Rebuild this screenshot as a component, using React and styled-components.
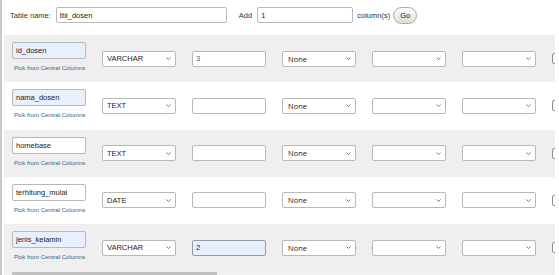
import React from 'react'
import styled, { createGlobalStyle } from 'styled-components'

const Global = createGlobalStyle`
  html, body {
    margin: 0;
    padding: 0;
    background: #fff;
  }
  body {
    font-family: 'Liberation Sans', Arial, sans-serif;
  }
`

const Page = styled.div`
  width: 557px;
  height: 275px;
  overflow: hidden;
  border-left: 2px solid #c9c9c9;
  background: #fff;
`

const Header = styled.div`
  display: flex;
  align-items: center;
  height: 35px;
  padding: 0 0 5px 8px;
  box-sizing: border-box;
  font-size: 7.5px;
  color: #333;
`

const Label = styled.span`
  margin-left: ${(p) => p.$gap || 0}px;
  white-space: nowrap;
`

const Field = styled.input`
  display: block;
  box-sizing: border-box;
  width: ${(p) => p.$w}px;
  height: ${(p) => p.$h || 17}px;
  margin-left: ${(p) => p.$gap || 0}px;
  padding: 0 0 0 3px;
  border: 1px solid ${(p) => (p.$focus ? '#8f9bb0' : '#b8b8b8')};
  border-radius: 2px;
  background: ${(p) => (p.$fill ? '#e8f0fe' : '#fff')};
  font-family: 'Liberation Sans', Arial, sans-serif;
  font-size: 7.5px;
  color: ${(p) => (p.$muted ? '#666' : '#222')};
  outline: none;
`

const GoButton = styled.button`
  box-sizing: border-box;
  width: 24px;
  height: 17px;
  margin-left: 3px;
  padding: 0;
  border: 1px solid #aaa;
  border-radius: 9px;
  background: linear-gradient(#ffffff, #dcdcdc);
  font-family: 'Liberation Sans', Arial, sans-serif;
  font-size: 7.5px;
  color: #222;
`

const TableArea = styled.div`
  margin-left: 2px;
  width: 551px;
  overflow: hidden;
`

const Row = styled.div`
  display: grid;
  grid-template-columns: repeat(6, 90px) 20px;
  align-items: center;
  width: 580px;
  height: 47.25px;
  padding-left: 8px;
  box-sizing: border-box;
  background: ${(p) => (p.$shade ? '#efefef' : '#fff')};
`

const NameCell = styled.div`
  align-self: start;
  display: flex;
  flex-direction: column;
  padding-top: 7px;
`

const Pick = styled.span`
  margin: 6px 0 0 2px;
  font-size: 6px;
  line-height: 7px;
  color: #2f6486;
  white-space: nowrap;
`

const SelectBox = styled.div`
  position: relative;
  width: 74px;
  height: 16px;
`

const Select = styled.select`
  display: block;
  appearance: none;
  box-sizing: border-box;
  width: 100%;
  height: 100%;
  padding: 0 0 0 ${(p) => (p.$soft ? 5 : 4)}px;
  border: 1px solid #b8b8b8;
  border-radius: 2px;
  background: #fff;
  font-family: ${(p) =>
    p.$soft ? "'Open Sans', 'Noto Sans', sans-serif" : "'Liberation Sans', Arial, sans-serif"};
  font-size: 7.5px;
  color: #222;
  outline: none;
`

const Chevron = styled.svg`
  position: absolute;
  right: 5px;
  top: 6.5px;
  width: 5px;
  height: 3px;
  pointer-events: none;
`

const Check = styled.span`
  display: block;
  width: 9px;
  height: 9px;
  border: 1px solid #8a8a8a;
  border-radius: 2px;
  background: #fff;
`

const Track = styled.div`
  height: 14px;
  background: #f1f1f1;
  display: flex;
  align-items: flex-start;
  padding-top: 1px;
`

const Thumb = styled.div`
  width: 205px;
  height: 8px;
  margin-left: 8px;
  border-radius: 1px;
  background: #c1c1c1;
`

function Dropdown({ value, soft }) {
  return (
    <SelectBox>
      <Select $soft={soft} defaultValue={value}>
        <option value={value}>{value}</option>
      </Select>
      <Chevron viewBox="0 0 5 3">
        <path d="M0.5 0.5 L2.5 2.5 L4.5 0.5" fill="none" stroke="#666" strokeWidth="0.9" />
      </Chevron>
    </SelectBox>
  )
}

const columns = [
  { name: 'id_dosen', type: 'VARCHAR', length: '3', filled: true },
  { name: 'nama_dosen', type: 'TEXT', length: '', filled: true },
  { name: 'homebase', type: 'TEXT', length: '' },
  { name: 'terhitung_mulai', type: 'DATE', length: '' },
  { name: 'jenis_kelamin', type: 'VARCHAR', length: '2', filled: true, focus: true },
]

export default function App() {
  return (
    <Page>
      <Global />
      <Header>
        <Label>Table name:</Label>
        <Field $w={171} $h={16} $gap={5} defaultValue="tbl_dosen" />
        <Label $gap={12}>Add</Label>
        <Field $w={96} $h={16} $gap={5} defaultValue="1" />
        <Label $gap={4}>column(s)</Label>
        <GoButton>Go</GoButton>
      </Header>
      <TableArea>
        {columns.map((c, i) => (
          <Row key={c.name} $shade={i % 2 === 0}>
            <NameCell>
              <Field $w={74} $fill={c.filled} defaultValue={c.name} />
              <Pick>Pick from Central Columns</Pick>
            </NameCell>
            <Dropdown value={c.type} />
            <Field
              $w={74}
              $h={16}
              $fill={c.focus}
              $focus={c.focus}
              $muted={!c.focus}
              defaultValue={c.length}
            />
            <Dropdown value="None" soft />
            <Dropdown value="" />
            <Dropdown value="" />
            <Check />
          </Row>
        ))}
        <Track>
          <Thumb />
        </Track>
      </TableArea>
    </Page>
  )
}
